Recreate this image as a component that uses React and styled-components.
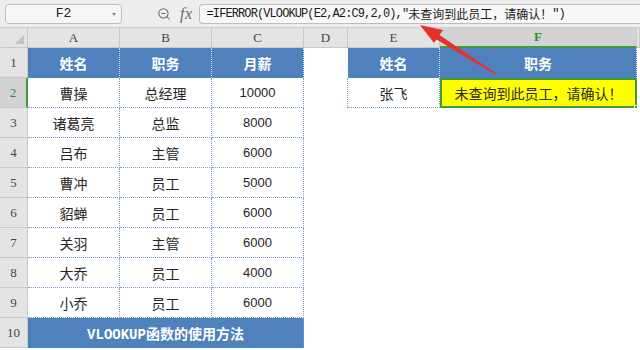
import React from "react";
import styled, { createGlobalStyle } from "styled-components";
import { ZoomOut } from "lucide-react";

const Global = createGlobalStyle`
  html, body { margin: 0; padding: 0; background: #fff; overflow: hidden; }
  * { box-sizing: border-box; }
`;

const Page = styled.div`
  position: relative;
  width: 640px;
  height: 350px;
  overflow: hidden;
  background: #fff;
  font-family: "Noto Sans CJK SC", sans-serif;
`;

const Toolbar = styled.div`
  height: 28px;
  background: #ededed;
  border-bottom: 1px solid #cfcfcf;
  display: flex;
  align-items: center;
  padding-left: 5px;
`;

const NameBox = styled.div`
  position: relative;
  width: 117px;
  height: 20px;
  border: 1px solid #bdbdbd;
  border-radius: 4px;
  background: #f6f6f6;
  display: flex;
  align-items: center;
  justify-content: center;
  font-family: "Liberation Mono", monospace;
  font-size: 13px;
  color: #222;
`;

const Caret = styled.span`
  position: absolute;
  right: 5px;
  top: 8px;
  width: 0;
  height: 0;
  border-left: 2.5px solid transparent;
  border-right: 2.5px solid transparent;
  border-top: 3px solid #888;
`;

const IconSlot = styled.div`
  display: flex;
  align-items: center;
  color: #6f6f6f;
  margin-left: ${(p) => p.$ml}px;
`;

const Fx = styled.span`
  font-family: "Liberation Serif", serif;
  font-style: italic;
  font-size: 16px;
  color: #6a6a6a;
  margin-left: 9px;
  letter-spacing: 0.5px;
`;

const FormulaBox = styled.div`
  flex: 1;
  height: 20px;
  margin-left: 6px;
  border: 1px solid #bdbdbd;
  border-right: none;
  border-radius: 4px 0 0 4px;
  background: #f7f7f7;
  display: flex;
  align-items: center;
  padding-left: 7px;
  font-family: "Liberation Mono", "Noto Sans CJK SC", monospace;
  font-size: 12px;
  color: #1a1a1a;
  white-space: nowrap;
  overflow: hidden;
`;

const Ascii = styled.span`
  letter-spacing: -0.9px;
`;

const Grid = styled.div`
  display: grid;
  grid-template-columns: 28px 92px 92px 92px 44px 92px 197px 1fr;
  grid-template-rows: 20px repeat(10, 30px);
`;

const ColHead = styled.div`
  background: ${(p) => (p.$active ? "#d3d3d3" : "#e4e4e4")};
  border-right: 1px solid #c8c8c8;
  border-bottom: ${(p) => (p.$active ? "2px solid #3e9a3a" : "1px solid #c8c8c8")};
  display: flex;
  align-items: center;
  justify-content: center;
  font-family: "Liberation Serif", serif;
  font-size: 13px;
  color: ${(p) => (p.$active ? "#2f8a2f" : "#444")};
  font-weight: ${(p) => (p.$active ? 700 : 400)};
`;

const Corner = styled.div`
  position: relative;
  background: #e4e4e4;
  border-right: 1px solid #c8c8c8;
  border-bottom: 1px solid #c8c8c8;
  &::after {
    content: "";
    position: absolute;
    right: 3px;
    bottom: 3px;
    width: 0;
    height: 0;
    border-left: 9px solid transparent;
    border-bottom: 9px solid #c2c2c2;
  }
`;

const RowHead = styled.div`
  background: ${(p) => (p.$active ? "#d3d3d3" : "#e4e4e4")};
  border-right: ${(p) => (p.$active ? "2px solid #3e9a3a" : "1px solid #c8c8c8")};
  border-bottom: 1px solid #c8c8c8;
  display: flex;
  align-items: center;
  justify-content: center;
  font-family: "Liberation Serif", serif;
  font-size: 13px;
  color: ${(p) => (p.$active ? "#2f8a2f" : "#444")};
`;

const DOT = "1px dotted #7d9fd3";
const WDOT = "1px dotted rgba(255,255,255,0.75)";

const Cell = styled.div`
  position: relative;
  display: flex;
  align-items: center;
  justify-content: center;
  white-space: nowrap;
  grid-column: ${(p) => (p.$span ? `span ${p.$span}` : "auto")};
  font-size: 14px;
  color: #262626;
  background: #fff;
  border-right: ${(p) => (p.$br ? DOT : "none")};
  border-bottom: ${(p) => (p.$bb ? DOT : "none")};
`;

const HeadCell = styled(Cell)`
  background: #4f81bd;
  color: #fff;
  font-weight: 700;
  font-size: 14px;
  border-right: ${WDOT};
  border-bottom: none;
`;

const NumCell = styled(Cell)`
  font-family: "Liberation Sans", sans-serif;
  font-size: 13px;
  color: #1f1f1f;
`;

const TitleCell = styled(Cell)`
  background: #4f81bd;
  color: #fff;
  font-weight: 700;
  font-size: 14px;
  font-family: "Liberation Mono", "Noto Sans CJK SC", monospace;
  border-right: ${DOT};
`;

const AlertCell = styled(Cell)`
  background: #ffff00;
  border: 2px solid #3e9a3a;
  font-size: 14px;
  color: #2a2a2a;
`;

const Handle = styled.span`
  position: absolute;
  right: -4px;
  bottom: -4px;
  width: 5px;
  height: 5px;
  background: #3e9a3a;
  border: 1px solid #fff;
`;

const ArrowLayer = styled.svg`
  position: absolute;
  left: 0;
  top: 0;
  pointer-events: none;
`;

const rows = [
  ["曹操", "总经理", "10000"],
  ["诸葛亮", "总监", "8000"],
  ["吕布", "主管", "6000"],
  ["曹冲", "员工", "5000"],
  ["貂蝉", "员工", "6000"],
  ["关羽", "主管", "6000"],
  ["大乔", "员工", "4000"],
  ["小乔", "员工", "6000"],
];

const cols = ["A", "B", "C", "D", "E", "F", ""];

export default function App() {
  return (
    <Page>
      <Global />
      <Toolbar>
        <NameBox>
          F2
          <Caret />
        </NameBox>
        <IconSlot $ml={35}>
          <ZoomOut size={14} strokeWidth={1.8} />
        </IconSlot>
        <Fx>fx</Fx>
        <FormulaBox>
          <Ascii>=IFERROR(VLOOKUP(E2,A2:C9,2,0),"</Ascii>
          未查询到此员工，请确认！
          <Ascii>")</Ascii>
        </FormulaBox>
      </Toolbar>
      <Grid>
        <Corner />
        {cols.map((c, i) => (
          <ColHead key={i} $active={c === "F"}>
            {c}
          </ColHead>
        ))}

        <RowHead>1</RowHead>
        <HeadCell>姓名</HeadCell>
        <HeadCell>职务</HeadCell>
        <HeadCell>月薪</HeadCell>
        <Cell />
        <HeadCell>姓名</HeadCell>
        <HeadCell>职务</HeadCell>
        <Cell />

        {rows.map((r, i) => (
          <React.Fragment key={i}>
            <RowHead $active={i === 0}>{i + 2}</RowHead>
            <Cell $br $bb>
              {r[0]}
            </Cell>
            <Cell $br $bb>
              {r[1]}
            </Cell>
            <NumCell $br $bb>
              {r[2]}
            </NumCell>
            {i === 0 ? (
              <>
                <Cell $br />
                <Cell $br $bb>
                  张飞
                </Cell>
                <AlertCell>
                  未查询到此员工，请确认！
                  <Handle />
                </AlertCell>
                <Cell />
              </>
            ) : (
              <>
                <Cell />
                <Cell />
                <Cell />
                <Cell />
              </>
            )}
          </React.Fragment>
        ))}

        <RowHead>10</RowHead>
        <TitleCell $span={3}>VLOOKUP函数的使用方法</TitleCell>
        <Cell />
        <Cell />
        <Cell />
        <Cell />
      </Grid>
      <ArrowLayer width="640" height="350">
        <polygon
          points="420,25 443,30 439.5,35 497,74 496,75 436.5,39.5 434,43"
          fill="#e8302a"
        />
      </ArrowLayer>
    </Page>
  );
}
